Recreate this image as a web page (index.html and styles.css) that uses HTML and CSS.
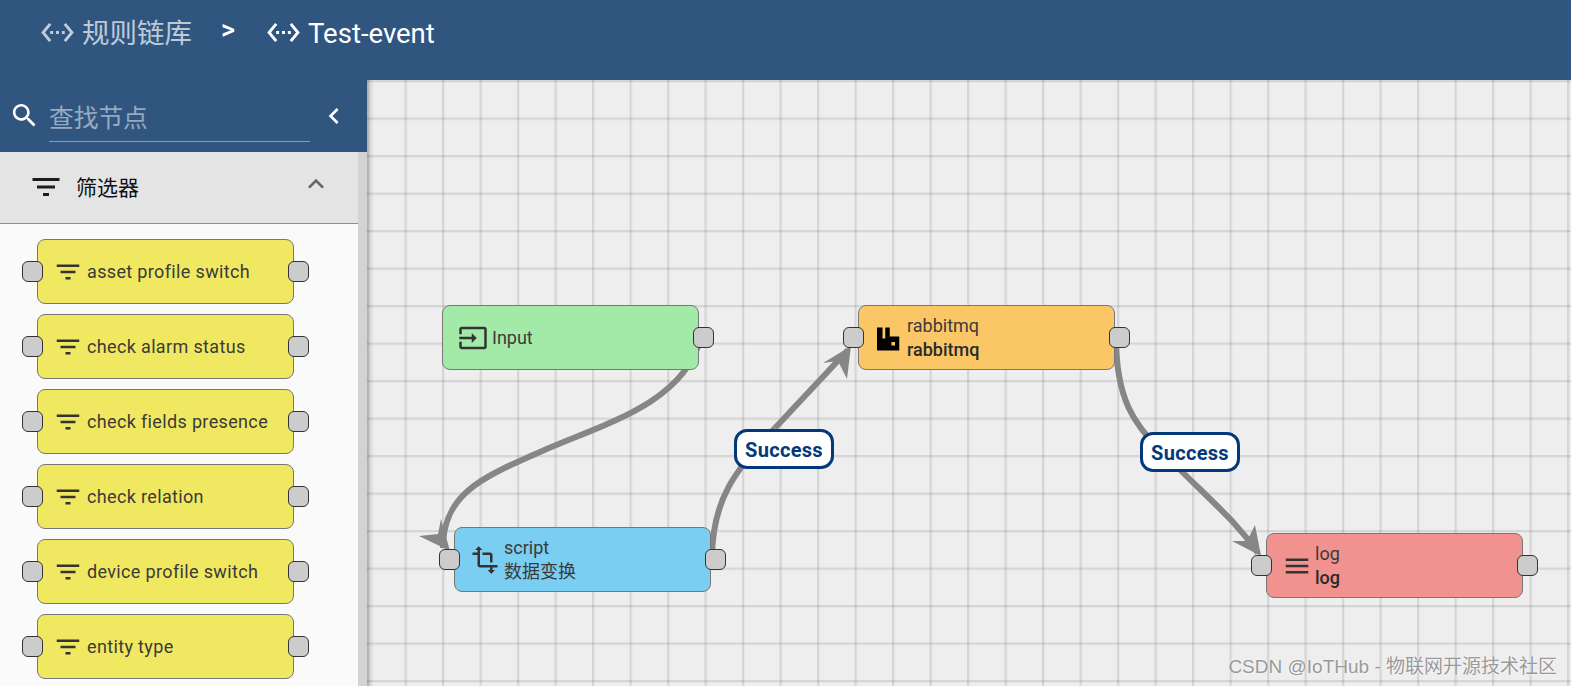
FILE: index.html
```html
<!DOCTYPE html>
<html lang="zh">
<head>
<meta charset="utf-8">
<title>Test-event</title>
<link rel="stylesheet" href="styles.css">
</head>
<body>
<svg class="defs" width="0" height="0">
  <defs>
    <symbol id="i-eth" viewBox="0 0 24 24"><path d="M7.77 6.76L6.23 5.48.82 12l5.41 6.52 1.54-1.28L3.42 12l4.35-5.24zM7 13h2v-2H7v2zm10-2h-2v2h2v-2zm-6 2h2v-2h-2v2zm6.77-7.52l-1.54 1.28L20.58 12l-4.35 5.24 1.54 1.28L23.18 12l-5.41-6.52z"/></symbol>
    <symbol id="i-filter" viewBox="0 0 24 24"><path d="M10 18h4v-2h-4v2zM3 6v2h18V6H3zm3 7h12v-2H6v2z"/></symbol>
  </defs>
</svg>
<header class="topbar">
  <div class="crumb crumb-muted"><svg class="crumb-icon"><use href="#i-eth"/></svg><span>规则链库</span></div>
  <span class="crumb-sep">&gt;</span>
  <div class="crumb"><svg class="crumb-icon"><use href="#i-eth"/></svg><span>Test-event</span></div>
</header>
<main class="main">
  <aside class="sidebar">
    <div class="search">
      <svg class="search-icon" viewBox="0 0 24 24"><path d="M15.5 14h-.79l-.28-.27C15.41 12.59 16 11.11 16 9.5 16 5.91 13.09 3 9.5 3S3 5.91 3 9.5 5.91 16 9.5 16c1.61 0 3.09-.59 4.23-1.57l.27.28v.79l5 4.99L20.49 19l-4.99-5zm-6 0C7.01 14 5 11.99 5 9.5S7.01 5 9.5 5 14 7.01 14 9.5 11.99 14 9.5 14z"/></svg>
      <div class="search-field">查找节点</div>
      <svg class="collapse-icon" viewBox="0 0 24 24"><path d="M15.41 7.41L14 6l-6 6 6 6 1.41-1.41L10.83 12z"/></svg>
    </div>
    <div class="panel">
      <div class="library">
        <div class="panel-head">
          <svg class="panel-icon"><use href="#i-filter"/></svg>
          <span class="panel-title">筛选器</span>
          <svg class="expand-icon" viewBox="0 0 24 24"><path d="M12 8l-6 6 1.41 1.41L12 10.83l4.59 4.58L18 14z"/></svg>
        </div>
        <div class="palette">
          <div class="pal-node"><i class="port port-l"></i><svg class="node-icon"><use href="#i-filter"/></svg><span>asset profile switch</span><i class="port port-r"></i></div>
          <div class="pal-node"><i class="port port-l"></i><svg class="node-icon"><use href="#i-filter"/></svg><span>check alarm status</span><i class="port port-r"></i></div>
          <div class="pal-node"><i class="port port-l"></i><svg class="node-icon"><use href="#i-filter"/></svg><span>check fields presence</span><i class="port port-r"></i></div>
          <div class="pal-node"><i class="port port-l"></i><svg class="node-icon"><use href="#i-filter"/></svg><span>check relation</span><i class="port port-r"></i></div>
          <div class="pal-node"><i class="port port-l"></i><svg class="node-icon"><use href="#i-filter"/></svg><span>device profile switch</span><i class="port port-r"></i></div>
          <div class="pal-node"><i class="port port-l"></i><svg class="node-icon"><use href="#i-filter"/></svg><span>entity type</span><i class="port port-r"></i></div>
        </div>
      </div>
      <div class="scroll-strip"></div>
    </div>
  </aside>
  <section class="canvas">
    <svg class="wires" width="1204" height="606" viewBox="367 80 1204 606">
      <g class="wire">
        <path d="M703 337L700 340C682 405 600 425 540 452C480 478 443 495 443 548"/>
        <path d="M775 428C735 470 712 500 712 559"/>
        <path d="M775 428L848 350"/>
        <path d="M1116 337C1116 400 1135 425 1160 450C1215 505 1235 520 1258 553"/>
      </g>
      <g class="arrow">
        <polygon points="450,551 419,536 438,534 441,519"/>
        <polygon points="851,346 823,363 838,361 847,379"/>
        <polygon points="1261,556 1232,541 1247,541 1255,525"/>
      </g>
    </svg>

    <div class="node node-input"><svg class="flow-icon" viewBox="0 0 24 24"><path d="M21 3.01H3c-1.1 0-2 .9-2 2V9h2V4.99h18v14.03H3V15H1v4.01c0 1.1.9 1.98 2 1.98h18c1.1 0 2-.88 2-1.98v-14c0-1.11-.9-2-2-2zM11 16l4-4-4-4v3H1v2h10v3z"/></svg><div class="node-text"><span>Input</span></div><i class="port port-r"></i></div>

    <div class="node node-script"><i class="port port-l"></i><svg class="flow-icon" viewBox="0 0 24 24"><path d="M22 18v-2H8V4h2L7 1 4 4h2v2H2v2h4v8c0 1.1.9 2 2 2h8v2h-2l3 3 3-3h-2v-2h4zM10 8h6v6h2V8c0-1.1-.9-2-2-2h-6v2z"/></svg><div class="node-text"><span>script</span><span>数据变换</span></div><i class="port port-r"></i></div>

    <div class="node node-rabbit"><i class="port port-l"></i><svg class="flow-icon rabbit-icon" viewBox="0 0 24 24"><path fill-rule="evenodd" d="M2.400 3.600H6.800V12.400H9V3.600H12.600V10.800H20.200V22H2.400zM14 15.200H16.800V18H14z"/></svg><div class="node-text"><span>rabbitmq</span><strong>rabbitmq</strong></div><i class="port port-r"></i></div>

    <div class="node node-log"><i class="port port-l"></i><svg class="flow-icon" viewBox="0 0 24 24"><path d="M3 18h18v-2H3v2zm0-5h18v-2H3v2zm0-7v2h18V6H3z"/></svg><div class="node-text"><span>log</span><strong>log</strong></div><i class="port port-r"></i></div>

    <div class="badge badge-one">Success</div>
    <div class="badge badge-two">Success</div>
    <div class="watermark">CSDN @IoTHub - 物联网开源技术社区</div>
  </section>
</main>
</body>
</html>
```
FILE: styles.css
```css
* { box-sizing: border-box; }
html, body { margin: 0; height: 100%; overflow: hidden; }
body {
  display: flex;
  flex-direction: column;
  font-family: Roboto, "Noto Sans CJK SC", sans-serif;
  color: #333;
  background: #305680;
}
.defs { position: absolute; }

.topbar {
  flex: 0 0 80px;
  display: flex;
  align-items: flex-start;
  padding: 16px 0 0 40px;
  background: #305680;
  color: #fff;
  font-size: 27.5px;
  line-height: 36px;
}
.crumb { display: flex; align-items: center; }
.crumb-muted { color: rgba(255, 255, 255, .7); }
.crumb-icon { width: 35px; height: 35px; margin: -3px 7px 0 0; fill: currentColor; }
.crumb-sep { margin: -4px 31px 0 29px; font-size: 27px; font-weight: 500; }

.main { flex: 1; display: flex; min-height: 0; }
.sidebar { flex: 0 0 367px; display: flex; flex-direction: column; min-height: 0; }
.search { flex: 0 0 72px; display: flex; align-items: flex-start; padding: 20px 0 0 9px; }
.search-icon { width: 31px; height: 31px; fill: #fff; }
.search-field {
  width: 261px;
  height: 42px;
  margin-left: 9px;
  border-bottom: 1px solid rgba(255, 255, 255, .42);
  color: rgba(255, 255, 255, .5);
  font-size: 24.7px;
  line-height: 38px;
}
.collapse-icon { width: 32px; height: 32px; margin: 0 0 0 8px; fill: #fff; }

.panel { flex: 1; display: flex; min-height: 0; overflow: hidden; }
.library { flex: 0 0 358px; background: #fafafa; }
.scroll-strip { flex: 1; background: #d3d3d3; }
.panel-head {
  display: flex;
  align-items: center;
  height: 72px;
  padding: 0 26px 2px 28px;
  background: #e4e4e4;
  border-bottom: 1px solid #8f8f8f;
  color: #111;
  font-size: 21px;
}
.panel-icon { width: 36px; height: 36px; fill: #1c1c1c; }
.panel-title { flex: 1; margin: -2px 0 0 12px; }
.expand-icon { width: 32px; height: 32px; margin-top: -6px; fill: #666; }

.palette { display: flex; flex-direction: column; gap: 10px; padding: 15px 0 0 37px; }
.pal-node, .node {
  display: flex;
  align-items: center;
  width: 257px;
  height: 65px;
  border: 1px solid #777;
  border-radius: 8px;
  background: #f1e861;
}
.pal-node { position: relative; flex: none; padding-left: 15px; font-size: 18px; letter-spacing: .35px; color: #3a3a3a; }
.node-icon { width: 30px; height: 30px; margin-right: 4px; fill: #333; flex: none; }

.port {
  position: absolute;
  top: 21px;
  width: 21px;
  height: 21px;
  border: 1px solid #333;
  border-radius: 6px;
  background: #ccc;
}
.port-l { left: -16px; }
.port-r { right: -16px; }

.canvas {
  position: relative;
  flex: 1;
  overflow: hidden;
  background-color: #eee;
  background-image:
    linear-gradient(90deg, rgba(0, 0, 0, .18), rgba(0, 0, 0, 0) 7px),
    linear-gradient(90deg, rgba(0, 0, 0, .1) 1.500px, rgba(0, 0, 0, .03) 2.500px, transparent 3px),
    linear-gradient(rgba(0, 0, 0, .1) 1.500px, rgba(0, 0, 0, .03) 2.500px, transparent 3px);
  background-size: 100% 100%, 37.5px 37.5px, 37.5px 37.5px;
}
.wires { position: absolute; left: 0; top: 0; }
.wire path { fill: none; stroke: #868686; stroke-width: 6; }
.arrow polygon { fill: #868686; }

.node { position: absolute; padding-left: 15px; font-size: 18px; line-height: 24px; color: #3a3a3a; }
.flow-icon { width: 30px; height: 30px; flex: none; fill: #333; }
.node-text { display: flex; flex-direction: column; margin-left: 3px; }
.node-text strong { font-weight: 500; color: #2a2a2a; }
.node-input .node-text, .node-script .node-text { margin-left: 4px; }
.node-input { left: 75px; top: 225px; background: #a3eaa9; }
.node-script { left: 87px; top: 447px; background: #79cef1; }
.node-rabbit { left: 491px; top: 225px; background: #fbc766; }
.node-log { left: 899px; top: 453px; background: #f1928f; }
.rabbit-icon { fill: #000; }

.badge {
  position: absolute;
  display: flex;
  align-items: center;
  justify-content: center;
  width: 100px;
  height: 40px;
  padding-top: 1px;
  border: 3px solid #03387a;
  border-radius: 13px;
  background: #fff;
  color: #03387a;
  font-size: 20px;
  font-weight: 700;
  letter-spacing: .3px;
}
.badge-one { left: 367px; top: 349px; }
.badge-two { left: 773px; top: 352px; }

.watermark {
  position: absolute;
  right: 14px;
  bottom: 6px;
  color: #999;
  font-family: "Liberation Sans", "Noto Sans CJK SC", sans-serif;
  font-size: 19px;
  line-height: 26px;
  text-shadow: 0 0 2px #fff;
}
```
